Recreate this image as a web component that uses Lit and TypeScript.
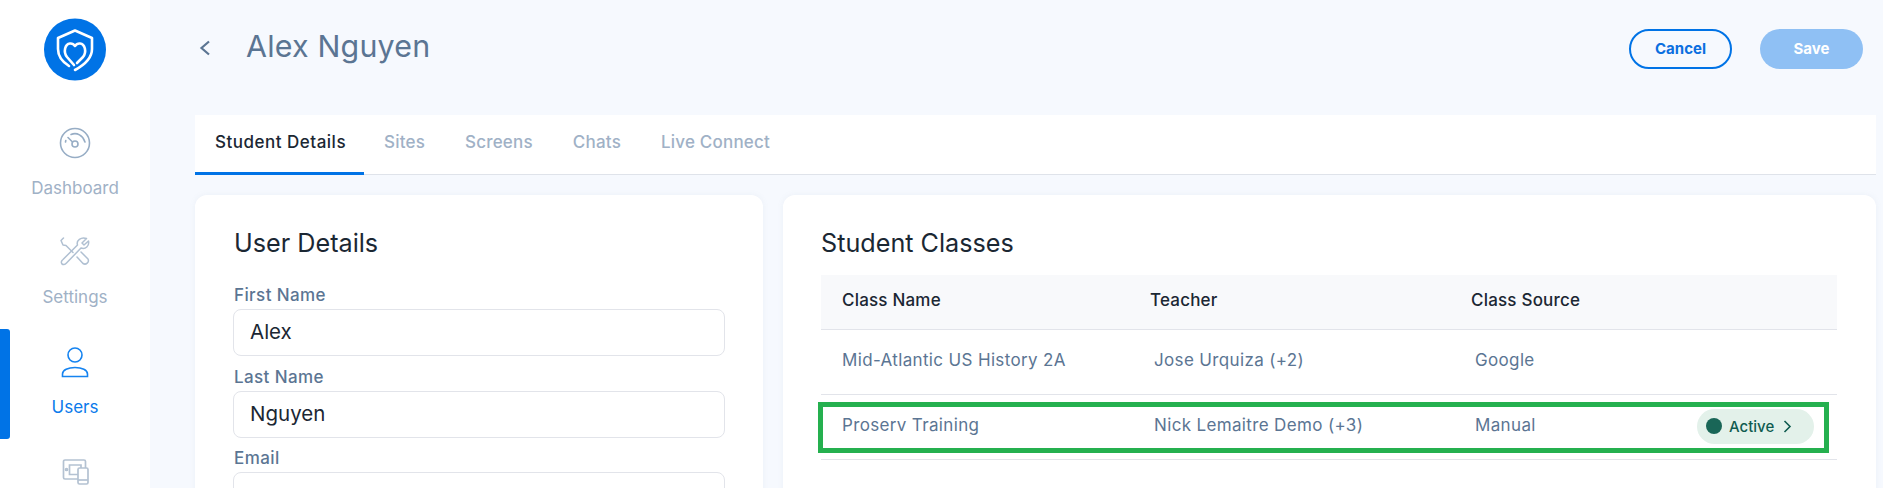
import { LitElement, html, css } from "lit";
import { customElement } from "lit/decorators.js";

@customElement("app-root")
export class AppRoot extends LitElement {
  static styles = css`
    :host { display: block; width: 1883px; height: 488px; overflow: hidden; background: #f6f9fe; font-family: Inter, "Noto Sans", sans-serif; }
    .page { display: grid; grid-template-columns: 150px 1fr; height: 488px; }
    .side { background: #fff; display: flex; flex-direction: column; align-items: stretch; }
    .logo { display: flex; justify-content: center; padding-top: 18px; height: 110px; box-sizing: border-box; }
    .nav { position: relative; height: 110px; display: flex; flex-direction: column; align-items: center; color: #a0b1c6; font-size: 17px; letter-spacing: 0; }
    .nav svg { display: block; margin-top: 17px; }
    .nav span { margin-top: 18px; line-height: 22px; }
    .nav.active { color: #0b7aeb; height: 109px; }
    .nav.active::before { content: ""; position: absolute; left: 0; top: -1px; bottom: 0; width: 10px; background: #0073e6; border-radius: 0 3px 3px 0; }
    .nav .gear { margin-top: 17px; }
    .nav .devices { margin-top: 20px; }
    .main { padding-right: 7px; padding-left: 45px; display: flex; flex-direction: column; }
    .head { height: 115px; display: flex; align-items: flex-start; }
    .back { margin: 40px 35px 0 4px; }
    h1 { margin: 26px 0 0; font-size: 30.4px; line-height: 40px; font-weight: 400; color: #5b7593; flex: 1; letter-spacing: 0.2px; }
    .btn { width: 103px; height: 40px; box-sizing: border-box; margin-top: 29px; border-radius: 20px; font-size: 15px; font-weight: 700; display: flex; align-items: center; justify-content: center; line-height: 36px; padding-bottom: 1px; }
    .cancel { border: 2px solid #0073e6; color: #0b6fe0; margin-right: 28px; }
    .save { background: #8fc0f4; color: #fff; margin-right: 13px; }
    .tabs { height: 60px; box-sizing: border-box; background: #fff; border-bottom: 1px solid #dfe3ea; display: flex; font-size: 17px; font-weight: 500; color: #a0b1c6; letter-spacing: 0.2px; }
    .tab { padding: 0 20px; line-height: 55px; height: 60px; box-sizing: border-box; }
    .tab.on { color: #1b2733; border-bottom: 3px solid #0073e6; width: 169px; padding-left: 20px; white-space: nowrap; padding-right: 0; letter-spacing: 0.5px; }
    .cards { display: grid; grid-template-columns: 568px 1fr; gap: 20px; margin-top: 20px; height: 320px; }
    .card { background: #fff; border-radius: 12px 12px 0 0; padding: 32px 39px 0; box-shadow: 0 0 6px rgba(120, 140, 170, 0.08); }
    h2 { margin: 0; font-size: 25.2px; line-height: 32px; font-weight: 400; color: #1b2733; }
    .lab { font-size: 17px; line-height: 20px; font-weight: 500; color: #5b7593; letter-spacing: 0.4px; }
    .first { margin-top: 26px; }
    .input { height: 47px; box-sizing: border-box; width: 492px; margin: 4px 0 10.5px -1px; border: 1.5px solid #e2e4ea; border-radius: 8px; padding: 0 16px; font-size: 20.5px; line-height: 43px; color: #1b2733; }
    .right { padding: 32px 38px 0; }
    .table { margin-top: 16px; width: 1016px; font-size: 17px; letter-spacing: 0.35px; }
    .row { position: relative; display: grid; grid-template-columns: 329px 321px 1fr auto; align-items: center; height: 65px; border-bottom: 1.5px solid #e2e4ea; box-sizing: border-box; color: #5b7593; padding: 0 23px 4px 0; }
    .row.th { height: 54.5px; background: #f8f9fb; color: #1b2733; font-weight: 500; letter-spacing: 0.2px; }
    .row > :first-child { padding-left: 21px; }
    .row:not(.th) > :nth-child(2), .row:not(.th) > :nth-child(3) { padding-left: 4px; }
    .hl::after { content: ""; position: absolute; left: -3px; right: 8px; top: 7.5px; bottom: 6px; border: 5px solid #25b04f; pointer-events: none; }
    .pill { width: 117px; height: 35px; margin-top: 3px; border-radius: 18px; background: #e3f1ea; display: flex; align-items: center; box-sizing: border-box; padding-left: 9px; font-size: 15px; font-weight: 500; color: #105c50; letter-spacing: 0; }
    .dot { width: 16px; height: 16px; border-radius: 50%; background: #196657; margin-right: 7px; }
    .pill svg { margin-left: 9px; }
  `;

  render() {
    return html`<div class="page">
      <aside class="side">
        <div class="logo">
          <svg width="62" height="63" viewBox="0 0 62 63">
            <circle cx="31" cy="31.5" r="31" fill="#0073e6"/>
            <g fill="none" stroke="#fff" stroke-width="2.6" stroke-linecap="round" stroke-linejoin="round">
              <path d="M25 48 C17 43 14 37 14 31 V20 L31 12.5 L48 20 V31 C48 39 42 46 31 52"/>
              <path d="M30 47 L23 39 C19 34 21 26 26 25.5 C28.5 25.3 30 26.5 31 28 C32 26.5 33.5 25.3 36 25.5 C41 26 43 34 39 39 L33 45"/>
            </g>
          </svg>
        </div>
        <div class="nav">
          <svg width="32" height="32" viewBox="0 0 32 32" fill="none" stroke="#97adc5" stroke-width="1.6" stroke-linecap="round">
            <circle cx="16" cy="16" r="14.5"/>
            <circle cx="16" cy="17" r="3"/>
            <path d="M13.5 15 L9 10.5 M6.5 15 L6.8 13.5 M12 7.5 C18 5 24 8.5 26 15"/>
          </svg>
          <span>Dashboard</span>
        </div>
        <div class="nav">
          <svg class="gear" width="30" height="31" viewBox="0 0 30 31" fill="none" stroke="#b0c0d2" stroke-width="1.5" stroke-linejoin="round" stroke-linecap="round">
            <path d="M3.5 1 L1 3.5 L3 8 L6 8.5 L13 15.5 M17 20 L23 26.5 A3.5 3.5 0 0 0 28 22 L21 15"/>
            <path d="M26.5 1.5 L22 6 L24 8 L28.5 4 C29.5 9 25.5 12.5 21 11 L6.5 26 C3 30 -1 25.5 3 22.5 L17.5 8 C16 3.5 21 -0.5 26.5 1.5 Z"/>
          </svg>
          <span>Settings</span>
        </div>
        <div class="nav active">
          <svg width="28" height="31" viewBox="0 0 28 31" fill="none" stroke="#1583f0" stroke-width="1.6">
            <circle cx="14" cy="8" r="7"/>
            <path d="M1.5 29.5 H26.5 V27 C26.5 23 21 20.5 14 20.5 S1.5 23 1.5 27 Z"/>
          </svg>
          <span>Users</span>
        </div>
        <div class="nav">
          <svg class="devices" width="27" height="26" viewBox="0 0 27 26" fill="none" stroke="#b4c2d2" stroke-width="1.7">
            <path d="M17 20 H3 A1.5 1.5 0 0 1 1.5 18.5 V2.5 A1.5 1.5 0 0 1 3 1 H22 A1.5 1.5 0 0 1 23.5 2.5 V9"/>
            <path d="M16 15.5 H7.5 V6 H19 V9"/>
            <circle cx="4.5" cy="10.5" r="1"/>
            <rect x="16" y="9" width="10" height="16" rx="1.5" fill="#fff"/>
            <path d="M16 21 H26"/>
          </svg>
        </div>
      </aside>
      <div class="main">
        <header class="head">
          <svg class="back" width="12" height="16" viewBox="0 0 12 16" fill="none" stroke="#5b7593" stroke-width="2.2"><path d="M10 1.5 L2.5 8 L10 14.5"/></svg>
          <h1>Alex Nguyen</h1>
          <div class="btn cancel">Cancel</div>
          <div class="btn save">Save</div>
        </header>
        <nav class="tabs">
          <div class="tab on">Student Details</div>
          <div class="tab">Sites</div>
          <div class="tab">Screens</div>
          <div class="tab">Chats</div>
          <div class="tab">Live Connect</div>
        </nav>
        <div class="cards">
          <section class="card">
            <h2>User Details</h2>
            <div class="lab first">First Name</div>
            <div class="input">Alex</div>
            <div class="lab">Last Name</div>
            <div class="input">Nguyen</div>
            <div class="lab">Email</div>
            <div class="input"></div>
          </section>
          <section class="card right">
            <h2>Student Classes</h2>
            <div class="table">
              <div class="row th"><div>Class Name</div><div>Teacher</div><div>Class Source</div><div></div></div>
              <div class="row"><div>Mid-Atlantic US History 2A</div><div>Jose Urquiza (+2)</div><div>Google</div><div></div></div>
              <div class="row hl"><div>Proserv Training</div><div>Nick Lemaitre Demo (+3)</div><div>Manual</div>
                <div class="pill"><i class="dot"></i>Active
                  <svg width="9" height="13" viewBox="0 0 9 13" fill="none" stroke="#105c50" stroke-width="1.6"><path d="M1.5 1 L7 6.5 L1.5 12"/></svg>
                </div>
              </div>
            </div>
          </section>
        </div>
      </div>
    </div>`;
  }
}
